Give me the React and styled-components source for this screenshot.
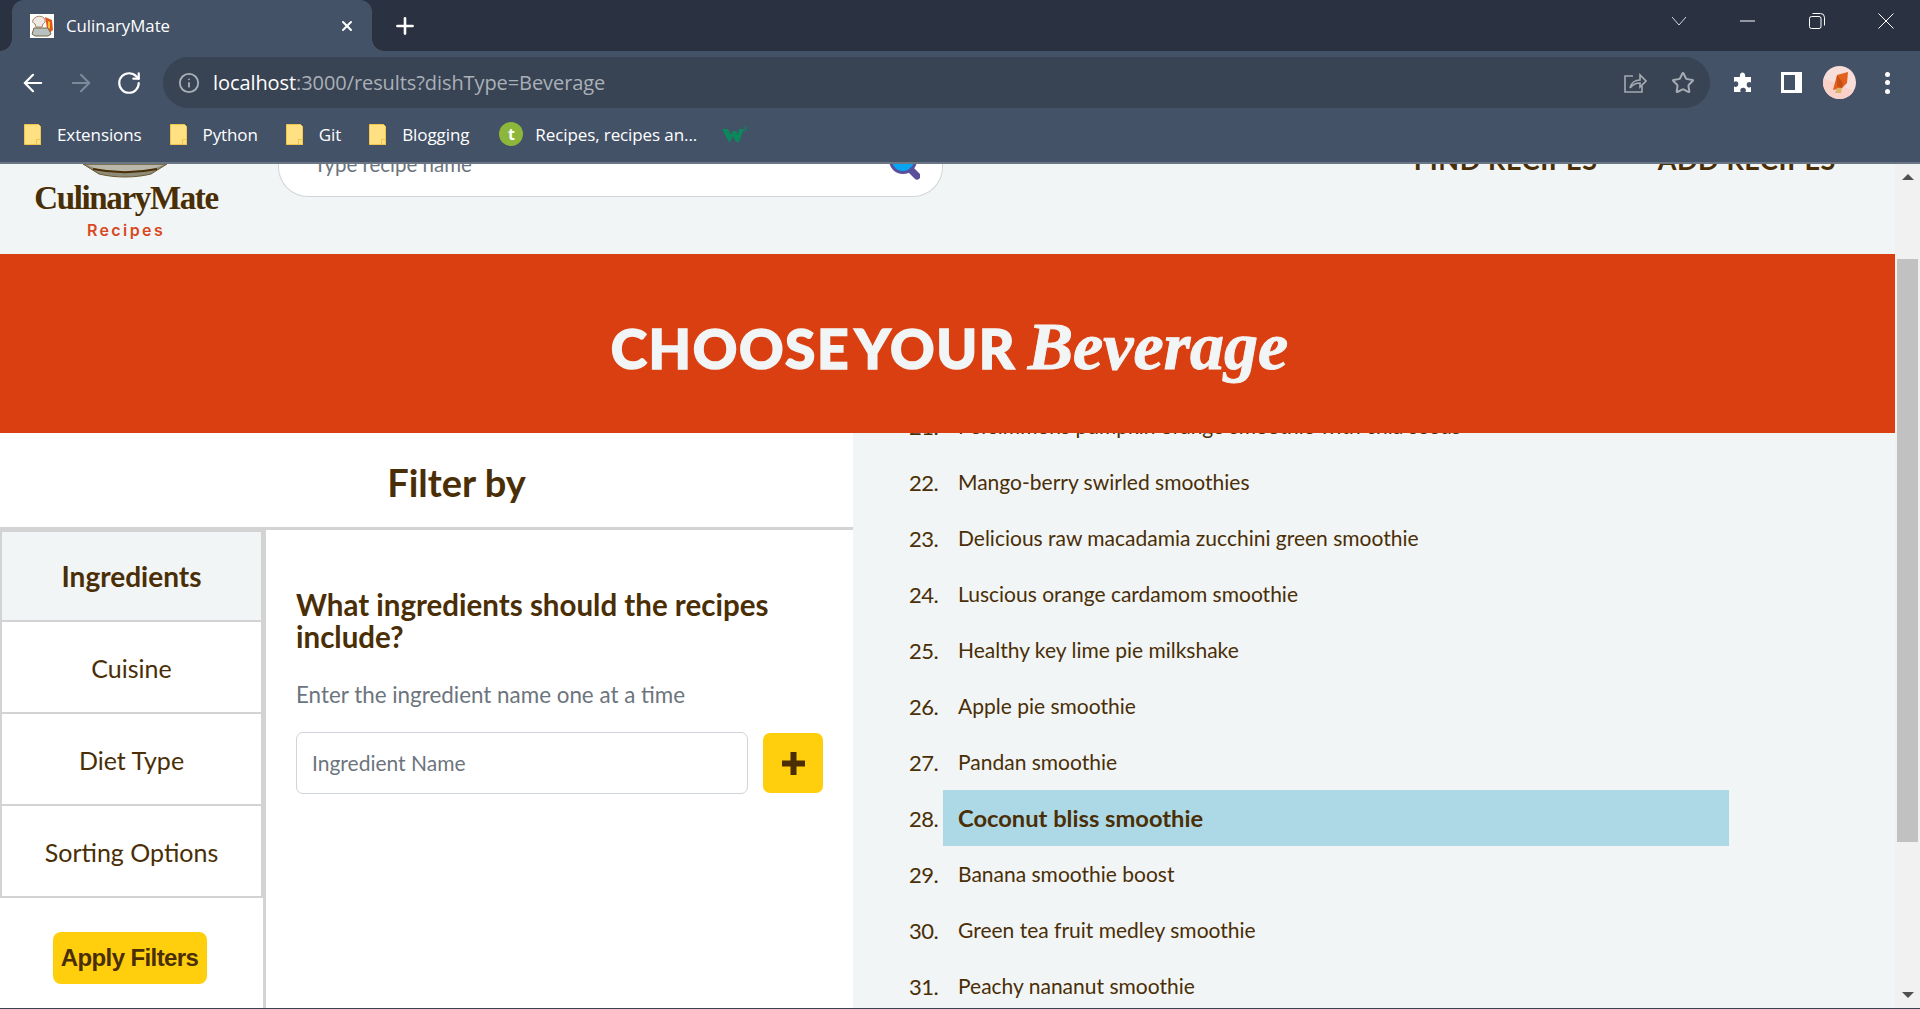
import React from "react";
import styled, { createGlobalStyle } from "styled-components";
import { ArrowLeft, ArrowRight, RotateCw, Info, Star, Plus, X } from "lucide-react";

const recipes = [
  { n: 21, name: "Persimmons pumpkin orange smoothie with chia seeds" },
  { n: 22, name: "Mango-berry swirled smoothies" },
  { n: 23, name: "Delicious raw macadamia zucchini green smoothie" },
  { n: 24, name: "Luscious orange cardamom smoothie" },
  { n: 25, name: "Healthy key lime pie milkshake" },
  { n: 26, name: "Apple pie smoothie" },
  { n: 27, name: "Pandan smoothie" },
  { n: 28, name: "Coconut bliss smoothie", active: true },
  { n: 29, name: "Banana smoothie boost" },
  { n: 30, name: "Green tea fruit medley smoothie" },
  { n: 31, name: "Peachy nananut smoothie" },
];

const tabs = ["Ingredients", "Cuisine", "Diet Type", "Sorting Options"];
const bookmarks = ["Extensions", "Python", "Git", "Blogging"];

function Folder() {
  return (
    <svg width="17" height="21" viewBox="0 0 17 21">
      <path d="M.5.500h14l2 2v18H.5z" fill="#ffe083" stroke="#f2c64a" />
      <path d="M12 15h5v6h-5z" fill="#f2c64a" />
      <path d="M13 16h3v4h-3z" fill="#ffe083" />
    </svg>
  );
}

export default function App() {
  return (
    <>
      <Global />
      <Window>
        <TabStrip>
          <Tab>
            <Favicon>
              <svg width="24" height="24" viewBox="0 0 24 24">
                <path d="M0 0h24v24H0z" fill="#fff" />
                <path d="M15 3l7 3 1 10-5 4z" fill="#e2571c" />
                <path d="M18 7l2 1v6l-2 2z" fill="#f5c02c" />
                <path d="M3 6c2-4 8-5 11-2 2 2 1 5-1 6l-1 3H6L5 10C3 9 2 8 3 6z" fill="#efe9e2" stroke="#8a6a45" strokeWidth=".8" />
                <path d="M4 14h14l3 6-3 2H5l-3-2z" fill="#b9c0c2" stroke="#77663f" strokeWidth="1" />
              </svg>
            </Favicon>
            <TabTitle>CulinaryMate</TabTitle>
            <X size={16} color="#fff" strokeWidth={3} />
          </Tab>
          <NewTab>
            <Plus size={26} color="#fff" strokeWidth={2.4} />
          </NewTab>
          <WindowControls>
            <WinButton>
              <svg width="16" height="10" viewBox="0 0 16 10" fill="none" stroke="#d5d9df">
                <path d="M1 1l7 8 7-8" />
              </svg>
            </WinButton>
            <WinButton>
              <svg width="16" height="2" viewBox="0 0 16 2" fill="none" stroke="#fff">
                <path d="M0 1h15" />
              </svg>
            </WinButton>
            <WinButton>
              <svg width="16" height="16" viewBox="0 0 16 16" fill="none" stroke="#fff">
                <rect x=".5" y="3.500" width="11.500" height="12" rx="2" />
                <path d="M3.500.500h8a4 4 0 0 1 4 4v8" />
              </svg>
            </WinButton>
            <WinButton>
              <svg width="16" height="16" viewBox="0 0 16 16" fill="none" stroke="#fff">
                <path d="M.5.500l15 15M15.500.500l-15 15" />
              </svg>
            </WinButton>
          </WindowControls>
        </TabStrip>

        <Toolbar>
          <NavButton>
            <ArrowLeft size={28} color="#fff" strokeWidth={1.9} />
          </NavButton>
          <NavButton>
            <ArrowRight size={28} color="#7d8898" strokeWidth={1.9} />
          </NavButton>
          <NavButton>
            <RotateCw size={26} color="#fff" strokeWidth={2} />
          </NavButton>
          <Omnibox>
            <Info size={22} color="#aab0b8" strokeWidth={2} />
            <Url>
              <b>localhost</b>:3000/results?dishType=Beverage
            </Url>
            <OmniButton>
              <svg width="24" height="22" viewBox="0 0 24 22" fill="none" stroke="#a5abb3" strokeWidth="1.6">
                <path d="M10 4H2v16h17v-6" />
                <path d="M7 16c1-5 5-8 10-8V3l6 6-6 6v-4c-4 0-7 1-10 5z" />
              </svg>
            </OmniButton>
            <OmniButton>
              <Star size={24} color="#a5abb3" strokeWidth={2} />
            </OmniButton>
          </Omnibox>
          <ToolbarIcons>
            <NavButton>
              <svg width="22" height="22" viewBox="0 0 22 22" fill="#fff">
                <path d="M8 2.500a2.600 2.600 0 0 1 5 0l.2 2.500H19v5.500l-1.500-.5a2.800 2.800 0 0 0 0 5.600l1.500-.5V20h-5.500l.4-1.500a2.800 2.800 0 0 0-5.600 0l.4 1.500H2v-5.500l1.500.4a2.800 2.800 0 0 0 0-5.600L2 10V5h5.800z" />
              </svg>
            </NavButton>
            <NavButton>
              <svg width="21" height="21" viewBox="0 0 21 21">
                <path d="M0 0h21v21H0z" fill="#fff" />
                <path d="M3 3h11v15H3z" fill="#435267" />
              </svg>
            </NavButton>
            <NavButton>
              <Avatar>
                <svg width="33" height="33" viewBox="0 0 33 33">
                  <path d="M0 0h33v33H0z" fill="#f8dedb" />
                  <path d="M0 12l33 14v7H0z" fill="#fbd0c6" />
                  <path d="M10 24l4-15 11-3-1 11-5 5z" fill="#e2611f" />
                  <path d="M14 9l6 8-1 5-5-2z" fill="#c64f15" />
                  <path d="M14 22h5l-1 5h-6z" fill="#dcb36b" />
                </svg>
              </Avatar>
            </NavButton>
            <NavButton>
              <Dots>
                <i />
                <i />
                <i />
              </Dots>
            </NavButton>
          </ToolbarIcons>
        </Toolbar>

        <Bookmarks>
          {bookmarks.map((b) => (
            <Bookmark key={b}>
              <Folder />
              <span>{b}</span>
            </Bookmark>
          ))}
          <Bookmark $site>
            <Tumbleweed>t</Tumbleweed>
            <span>Recipes, recipes an...</span>
          </Bookmark>
          <svg width="26" height="20" viewBox="0 0 26 20">
            <path d="M0 5h6l3 6 2-4h3l2 4 1-6h5l-5 13h-3l-3-6-3 6H7z" fill="#0a8a5c" />
            <text x="21" y="7" fontSize="8" fill="#0a8a5c" fontFamily="Liberation Sans, sans-serif">
              3
            </text>
          </svg>
        </Bookmarks>

        <Viewport>
          <Page>
            <Header>
              <LogoBlock>
                <Bowl>
                  <svg width="84" height="14" viewBox="0 0 84 14">
                    <path d="M0 0h84L68 10c-16 4-36 4-52 0z" fill="#8e8b78" stroke="#6a5a30" strokeWidth="1" />
                    <path d="M4 1h76L70 5c-18 3-38 3-56 0z" fill="#b9b7aa" />
                    <path d="M10 5c20 4 44 4 64 0" fill="none" stroke="#4a2e06" strokeWidth="2" />
                  </svg>
                </Bowl>
                <LogoText>CulinaryMate</LogoText>
                <LogoSub>Recipes</LogoSub>
              </LogoBlock>
              <SearchBox>
                <SearchPlaceholder>Type recipe name</SearchPlaceholder>
                <svg width="32" height="34" viewBox="0 0 32 34">
                  <circle cx="15" cy="14" r="12.500" fill="#08a5f2" stroke="#5a4f9a" strokeWidth="3" />
                  <path d="M24 25l5 5" stroke="#5a4f9a" strokeWidth="7" strokeLinecap="round" />
                </svg>
              </SearchBox>
              <Nav>
                <NavLink>FIND RECIPES</NavLink>
                <NavLink>ADD RECIPES</NavLink>
              </Nav>
            </Header>

            <Hero>
              <HeroTitle>
                CHOOSE YOUR <HeroDish>Beverage</HeroDish>
              </HeroTitle>
            </Hero>

            <Columns>
              <FilterPanel>
                <FilterHeading>Filter by</FilterHeading>
                <FilterBody>
                  <TabColumn>
                    {tabs.map((t, i) => (
                      <FilterTab key={t} $active={i === 0}>
                        {t}
                      </FilterTab>
                    ))}
                    <ApplyWrap>
                      <ApplyButton>Apply Filters</ApplyButton>
                    </ApplyWrap>
                  </TabColumn>
                  <FilterContent>
                    <Question>What ingredients should the recipes include?</Question>
                    <Hint>Enter the ingredient name one at a time</Hint>
                    <InputRow>
                      <IngredientInput placeholder="Ingredient Name" />
                      <AddButton>
                        <svg width="23" height="23" viewBox="0 0 23 23">
                          <path d="M8.500 0h6v8.500H23v6h-8.500V23h-6v-8.500H0v-6h8.500z" fill="#4a2e06" />
                        </svg>
                      </AddButton>
                    </InputRow>
                  </FilterContent>
                </FilterBody>
              </FilterPanel>

              <Results>
                <RecipeList>
                  {recipes.map((r) => (
                    <RecipeRow key={r.n}>
                      <RecipeNum>{r.n}.</RecipeNum>
                      <RecipeName $active={r.active}>{r.name}</RecipeName>
                    </RecipeRow>
                  ))}
                </RecipeList>
              </Results>
            </Columns>
          </Page>
          <Scrollbar>
            <ScrollArrow $up />
            <ScrollTrack>
              <ScrollThumb />
            </ScrollTrack>
            <ScrollArrow />
          </Scrollbar>
        </Viewport>
        <BottomEdge />
      </Window>
    </>
  );
}

const brown = "#4a2e06";
const chrome = "#435267";
const chromeDark = "#2a3140";

const Global = createGlobalStyle`
  html, body {
    margin: 0;
    height: 100%;
    overflow: hidden;
    font-family: "Lato", "Liberation Sans", sans-serif;
  }
  * { box-sizing: border-box; }
`;

const Window = styled.div`
  display: flex;
  flex-direction: column;
  width: 1920px;
  height: 1009px;
  overflow: hidden;
`;

const TabStrip = styled.div`
  display: flex;
  align-items: flex-end;
  height: 51px;
  flex: none;
  padding-left: 12px;
  background: ${chromeDark};
`;

const Tab = styled.div`
  position: relative;
  display: flex;
  align-items: center;
  width: 360px;
  height: 51px;
  padding: 0 17px 0 18px;
  background: ${chrome};
  border-radius: 12px 12px 0 0;
  color: #fff;

  &::before,
  &::after {
    content: "";
    position: absolute;
    bottom: 0;
    width: 12px;
    height: 12px;
  }

  &::before {
    left: -12px;
    background: radial-gradient(circle at 0 0, ${chromeDark} 11.5px, ${chrome} 12px);
  }

  &::after {
    right: -12px;
    background: radial-gradient(circle at 100% 0, ${chromeDark} 11.5px, ${chrome} 12px);
  }
`;

const Favicon = styled.div`
  display: flex;
  width: 24px;
  height: 24px;
  margin-right: 12px;
`;

const TabTitle = styled.span`
  flex: 1;
  font-family: "Open Sans", sans-serif;
  font-size: 16.8px;
`;

const NewTab = styled.div`
  display: flex;
  align-items: center;
  height: 51px;
  margin-left: 20px;
`;

const WindowControls = styled.div`
  display: flex;
  align-self: flex-start;
  margin-left: auto;
`;

const WinButton = styled.div`
  display: flex;
  align-items: center;
  justify-content: center;
  width: 69px;
  height: 42px;
`;

const Toolbar = styled.div`
  display: flex;
  align-items: center;
  height: 61px;
  flex: none;
  padding: 2px 0 0 9px;
  background: ${chrome};
`;

const NavButton = styled.div`
  display: flex;
  align-items: center;
  justify-content: center;
  flex: none;
  width: 48px;
`;

const Omnibox = styled.div`
  display: flex;
  align-items: center;
  flex: none;
  width: 1547px;
  height: 51px;
  margin-left: 10px;
  padding: 0 3px 0 15px;
  border-radius: 26px;
  background: #384353;
`;

const Url = styled.div`
  flex: 1;
  margin-left: 13px;
  font-family: "Open Sans", sans-serif;
  font-size: 20px;
  letter-spacing: -0.08px;
  color: #aab0b8;

  b {
    font-weight: 400;
    color: #fff;
  }
`;

const OmniButton = styled.div`
  display: flex;
  align-items: center;
  justify-content: center;
  width: 48px;
`;

const ToolbarIcons = styled.div`
  display: flex;
  align-items: center;
  margin-left: 9px;
`;

const Avatar = styled.div`
  width: 33px;
  height: 33px;
  border-radius: 50%;
  overflow: hidden;
`;

const Dots = styled.div`
  display: flex;
  flex-direction: column;
  gap: 3.500px;

  i {
    display: block;
    width: 5px;
    height: 5px;
    border-radius: 50%;
    background: #fff;
  }
`;

const Bookmarks = styled.div`
  display: flex;
  align-items: center;
  flex: none;
  height: 52px;
  padding: 0 0 6px 24px;
  background: ${chrome};
  border-bottom: 2px solid #6a7686;
`;

const Bookmark = styled.div`
  display: flex;
  align-items: center;
  gap: ${({ $site }) => ($site ? "12px" : "16px")};
  margin-left: ${({ $site }) => ($site ? "2px" : "0")};
  margin-right: ${({ $site }) => ($site ? "25px" : "28px")};
  font-family: "Open Sans", sans-serif;
  font-size: 17px;
  letter-spacing: -0.1px;
  color: #fff;
`;

const Tumbleweed = styled.div`
  display: flex;
  align-items: center;
  justify-content: center;
  width: 24px;
  height: 24px;
  border-radius: 50%;
  background: #8cb73a;
  font-weight: 700;
  font-size: 16px;
`;

const Viewport = styled.div`
  display: flex;
  flex: 1;
  min-height: 0;
  overflow: hidden;
`;

const Page = styled.div`
  flex: 1;
  min-width: 0;
  background: #f1f5f6;
`;

const Header = styled.header`
  display: flex;
  height: 90px;
  background: #f1f5f6;
`;

const LogoBlock = styled.div`
  position: relative;
  width: 278px;
  padding-top: 16px;
  text-align: center;
`;

const Bowl = styled.div`
  position: absolute;
  top: 0;
  left: 83px;
  line-height: 0;
`;

const LogoText = styled.div`
  width: 252px;
  font-family: "Liberation Serif", serif;
  font-weight: 700;
  font-size: 33px;
  line-height: 36px;
  letter-spacing: -1.35px;
  color: ${brown};
`;

const LogoSub = styled.div`
  width: 252px;
  margin-top: 4px;
  font-family: "Inter", sans-serif;
  font-size: 16px;
  line-height: 20px;
  font-weight: 600;
  letter-spacing: 2.4px;
  color: #d8491f;
`;

const SearchBox = styled.div`
  display: flex;
  align-items: flex-start;
  justify-content: space-between;
  width: 665px;
  height: 33px;
  padding: 0 22px 0 35px;
  background: #fff;
  border: 1px solid #d3d6d8;
  border-top: 0;
  border-radius: 0 0 30px 30px;

  svg {
    margin-top: -18px;
  }
`;

const SearchPlaceholder = styled.span`
  margin-top: -13px;
  font-size: 20.5px;
  line-height: 26px;
  color: #6c757d;
`;

const Nav = styled.nav`
  display: flex;
  gap: 60px;
  margin-left: auto;
  padding-right: 59px;
`;

const NavLink = styled.span`
  margin-top: -17px;
  font-size: 27px;
  line-height: 26px;
  font-weight: 700;
  color: ${brown};
  letter-spacing: 0.6px;
`;

const Hero = styled.div`
  display: flex;
  align-items: center;
  justify-content: center;
  height: 179px;
  padding: 6px 0 0 4px;
  background: #d93f10;
`;

const HeroTitle = styled.h1`
  margin: 0;
  font-family: "Lato", sans-serif;
  font-size: 55px;
  font-weight: 900;
  letter-spacing: 1.6px;
  word-spacing: -8px;
  color: #f1f5f6;
  -webkit-text-stroke: 1.5px #f1f5f6;
`;

const HeroDish = styled.span`
  margin-left: 5px;
  font-family: "Liberation Serif", serif;
  font-weight: 700;
  font-style: italic;
  font-size: 68px;
  letter-spacing: 0;
  -webkit-text-stroke: 1px #f1f5f6;
`;

const Columns = styled.div`
  display: flex;
  height: 577px;
`;

const FilterPanel = styled.aside`
  display: flex;
  flex-direction: column;
  flex: none;
  width: 853px;
  background: #fff;
`;

const FilterHeading = styled.h2`
  margin: 0;
  height: 97px;
  padding-left: 60px;
  border-bottom: 3px solid #d3d3d3;
  font-size: 38px;
  line-height: 98px;
  font-weight: 700;
  text-align: center;
  color: ${brown};
`;

const FilterBody = styled.div`
  display: flex;
  flex: 1;
`;

const TabColumn = styled.div`
  display: flex;
  flex-direction: column;
  flex: none;
  width: 266px;
  border-right: 3px solid #d3d3d3;
`;

const FilterTab = styled.div`
  display: flex;
  align-items: center;
  justify-content: center;
  height: 92px;
  padding-top: ${({ $active }) => ($active ? "0" : "2px")};
  border: 2px solid #d3d3d3;
  border-top-width: ${({ $active }) => ($active ? "2px" : "0")};
  background: ${({ $active }) => ($active ? "#f1f5f6" : "#fff")};
  font-size: ${({ $active }) => ($active ? "28px" : "25px")};
  font-weight: ${({ $active }) => ($active ? 700 : 400)};
  color: ${brown};
`;

const ApplyWrap = styled.div`
  display: flex;
  justify-content: center;
  padding: 34px 4px 0 0;
`;

const ApplyButton = styled.button`
  width: 154px;
  height: 52px;
  padding: 0;
  border: 0;
  border-radius: 8px;
  background: #ffcf0d;
  font-family: "Liberation Sans", sans-serif;
  font-size: 24px;
  font-weight: 700;
  letter-spacing: -0.6px;
  color: ${brown};
`;

const FilterContent = styled.div`
  flex: 1;
  padding: 59px 30px 0 30px;
`;

const Question = styled.h3`
  margin: 0;
  font-size: 29.5px;
  line-height: 32px;
  font-weight: 700;
  color: ${brown};
`;

const Hint = styled.p`
  margin: 27px 0 0;
  font-size: 22.4px;
  line-height: 30px;
  color: #6c757d;
`;

const InputRow = styled.div`
  display: flex;
  align-items: center;
  gap: 15px;
  margin-top: 22px;
`;

const IngredientInput = styled.input`
  width: 452px;
  height: 62px;
  padding: 0 15px 2px;
  border: 1px solid #ced4da;
  border-radius: 7px;
  font-family: "Lato", sans-serif;
  font-size: 21px;

  &::placeholder {
    color: #6c757d;
    opacity: 1;
  }
`;

const AddButton = styled.button`
  display: flex;
  align-items: center;
  justify-content: center;
  width: 60px;
  height: 60px;
  padding: 0;
  border: 0;
  border-radius: 7px;
  background: #ffcf0d;
`;

const Results = styled.main`
  flex: 1;
  min-width: 0;
  overflow: hidden;
`;

const RecipeList = styled.ul`
  margin: -35px 0 0;
  padding: 0 0 0 56px;
  list-style: none;
`;

const RecipeRow = styled.li`
  display: flex;
  align-items: center;
  height: 56px;
  color: ${brown};
`;

const RecipeNum = styled.span`
  flex: none;
  width: 34px;
  font-size: 22px;
  letter-spacing: -0.5px;
`;

const RecipeName = styled.span`
  width: 786px;
  height: 56px;
  padding-left: 15px;
  line-height: 56px;
  font-size: ${({ $active }) => ($active ? "23.7px" : "21px")};
  font-weight: ${({ $active }) => ($active ? 700 : 400)};
  background: ${({ $active }) => ($active ? "#add8e6" : "transparent")};
`;

const Scrollbar = styled.div`
  display: flex;
  flex-direction: column;
  flex: none;
  width: 25px;
  background: #f1f1f1;
`;

const ScrollArrow = styled.div`
  display: flex;
  align-items: center;
  justify-content: center;
  flex: none;
  height: 26px;

  &::before {
    content: "";
    border-left: 6px solid transparent;
    border-right: 6px solid transparent;
    border-${({ $up }) => ($up ? "bottom" : "top")}: 6px solid #505050;
  }
`;

const ScrollTrack = styled.div`
  flex: 1;
  padding-top: 69px;
`;

const ScrollThumb = styled.div`
  height: 583px;
  margin: 0 2px;
  background: #c1c1c1;
`;

const BottomEdge = styled.div`
  flex: none;
  height: 1px;
  background: #3a4450;
`;
